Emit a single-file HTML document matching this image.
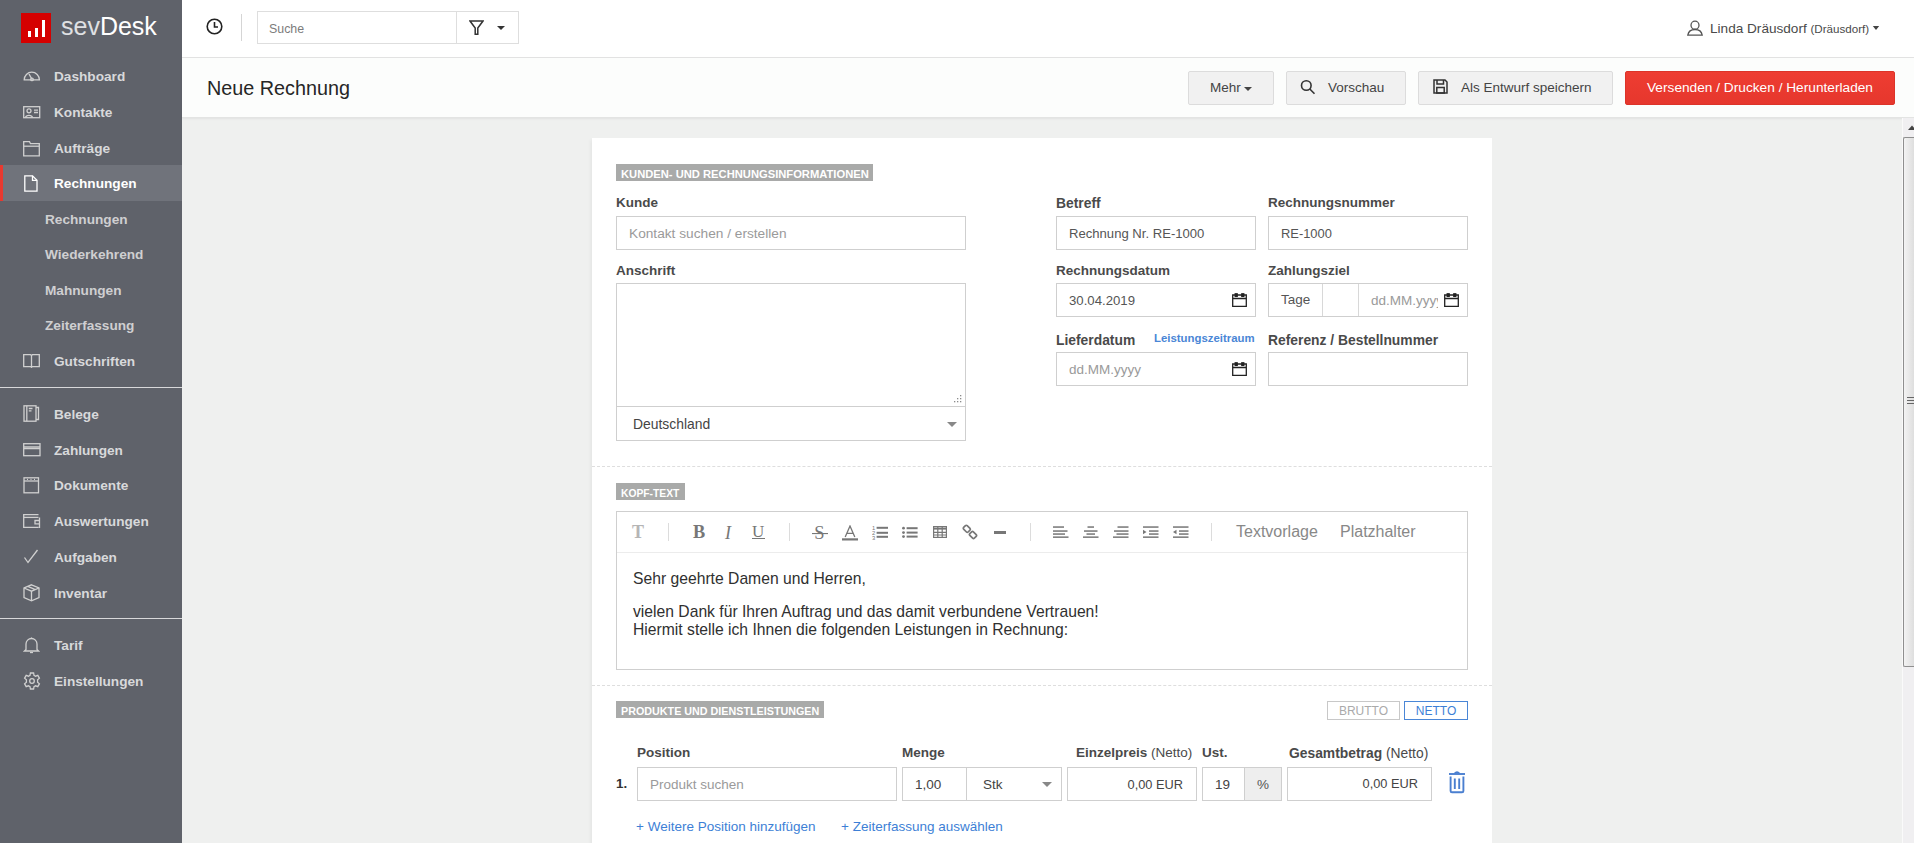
<!DOCTYPE html>
<html><head><meta charset="utf-8">
<style>
*{box-sizing:border-box;margin:0;padding:0}
html,body{width:1914px;height:843px;overflow:hidden;background:#eff0ef;font-family:"Liberation Sans",sans-serif;color:#333}
.a{position:absolute}
.nw{white-space:nowrap}
#side{left:0;top:0;width:182px;height:843px;background:#5f626a}
.nav{position:absolute;left:54px;color:#d8d9db;font-weight:bold;font-size:13.65px;line-height:20px;white-space:nowrap}
.ic{position:absolute;fill:none;stroke:#d0d0d0;stroke-width:1.3}
.sub{position:absolute;left:45px;color:#cfcfd1;font-weight:bold;font-size:13.65px;line-height:20px;white-space:nowrap}
.sep{position:absolute;left:0;width:182px;height:1px;background:#d8d8da}
#top{left:182px;top:0;width:1732px;height:58px;background:#fff;border-bottom:1px solid #e3e3e3}
#hdr{left:182px;top:58px;width:1732px;height:60px;background:#fcfdfc;border-bottom:1px solid #e3e4e3;box-shadow:0 1px 2px rgba(0,0,0,.06)}
.btn{position:absolute;top:71px;height:34px;background:#f1f1f1;border:1px solid #dcdcdc;border-radius:2px;font-size:13.5px;color:#444;line-height:32px;white-space:nowrap}
#card{left:592px;top:138px;width:900px;height:720px;background:#fff;box-shadow:-2px 2px 3px rgba(0,0,0,.04)}
.lbl{position:absolute;background:#a9aaa9;color:#fff;font-weight:bold;font-size:11.2px;height:17px;line-height:21px;padding-left:5px;white-space:nowrap}
.fl{position:absolute;font-weight:bold;font-size:13.5px;color:#4a4a4a;white-space:nowrap;line-height:16px}
.inp{position:absolute;height:34px;border:1px solid #cfcfcf;background:#fff;font-size:13.5px;color:#555;line-height:34px;padding-left:12px;white-space:nowrap}
.ph{color:#9a9a9a}
.dash{position:absolute;left:0;width:900px;height:0;border-top:1px dashed #dedede}
.link{position:absolute;color:#3d7fd6;font-size:13.5px;white-space:nowrap}
</style></head><body>
<div id="side" class="a">
  <!-- logo -->
  <div class="a" style="left:21px;top:13px;width:30px;height:30px;background:#d50000"></div>
  <div class="a" style="left:28px;top:31px;width:3.3px;height:5.8px;background:#fff"></div>
  <div class="a" style="left:35.2px;top:27.5px;width:3.3px;height:9.3px;background:#fff"></div>
  <div class="a" style="left:41.8px;top:19.5px;width:3px;height:17.3px;background:#fff"></div>
  <div class="a nw" style="left:61px;top:9px;font-size:25px;color:#fff;line-height:34px"><span style="color:#dfe0e3">sev</span>Desk</div>

  <div class="nav" style="top:67px">Dashboard</div>
  <svg class="ic" style="left:23px;top:70px" width="18" height="12" viewBox="0 0 18 12"><path d="M1.2 9.8 A7.6 7.6 0 0 1 16.4 9.8 L1.2 9.8 Z"/><path d="M6 4 L8.6 8.6"/><circle cx="9" cy="9.4" r="1.3"/></svg>

  <div class="nav" style="top:103px">Kontakte</div>
  <svg class="ic" style="left:23px;top:106px" width="18" height="13" viewBox="0 0 18 13"><rect x="0.7" y="0.7" width="16" height="11"/><circle cx="6" cy="4.8" r="2"/><path d="M2.5 11.6 C3 8.6 9 8.6 9.5 11.6"/><path d="M11 4.2 L15 4.2 M11 6.5 L15 6.5"/></svg>

  <div class="nav" style="top:139px">Aufträge</div>
  <svg class="ic" style="left:23px;top:141px" width="18" height="16" viewBox="0 0 18 16"><path d="M0.7 0.7 L6.5 0.7 L7.5 2.7 L16.3 2.7 L16.3 14.8 L0.7 14.8 Z"/><path d="M0.7 5.2 L16.3 5.2"/></svg>

  <div class="a" style="left:0;top:165px;width:182px;height:36px;background:#70737b"></div>
  <div class="a" style="left:0;top:165px;width:3px;height:36px;background:#e8392f"></div>
  <div class="nav" style="top:174px;color:#fff">Rechnungen</div>
  <svg class="ic" style="left:24px;top:175px;stroke:#fff" width="14" height="17" viewBox="0 0 14 17"><path d="M0.8 0.8 L8.5 0.8 L13 5.3 L13 16.2 L0.8 16.2 Z"/><path d="M8.5 0.8 L8.5 5.3 L13 5.3"/></svg>

  <div class="sub" style="top:210px">Rechnungen</div>
  <div class="sub" style="top:245px">Wiederkehrend</div>
  <div class="sub" style="top:281px">Mahnungen</div>
  <div class="sub" style="top:316px">Zeiterfassung</div>

  <div class="nav" style="top:352px">Gutschriften</div>
  <svg class="ic" style="left:23px;top:354px" width="18" height="14" viewBox="0 0 18 14"><path d="M0.7 0.7 L7.6 0.7 L8.5 1.5 L9.4 0.7 L16.3 0.7 L16.3 12.6 L9.4 12.6 L8.5 13.3 L7.6 12.6 L0.7 12.6 Z"/><path d="M8.5 1.5 L8.5 13.3"/></svg>

  <div class="sep" style="top:387px"></div>

  <div class="nav" style="top:405px">Belege</div>
  <svg class="ic" style="left:23px;top:405px" width="17" height="17" viewBox="0 0 17 17"><rect x="1" y="0.8" width="12" height="15.4"/><path d="M3.8 0.8 L3.8 16.2"/><path d="M13 2.5 L15.5 2.5 L15.5 14.5 L13 14.5"/><path d="M5.8 3.5 L9.5 3.5 M5.8 5.8 L8.5 5.8"/></svg>

  <div class="nav" style="top:441px">Zahlungen</div>
  <svg class="ic" style="left:23px;top:443px" width="18" height="14" viewBox="0 0 18 14"><rect x="0.7" y="0.7" width="16.3" height="12"/><path d="M0.7 4 L17 4 M0.7 5.6 L17 5.6"/></svg>

  <div class="nav" style="top:476px">Dokumente</div>
  <svg class="ic" style="left:23px;top:477px" width="17" height="17" viewBox="0 0 17 17"><rect x="1" y="0.8" width="14.5" height="15"/><path d="M1 4 L15.5 4"/><path d="M4 2.4 L5 2.4 M7.5 2.4 L8.5 2.4 M11 2.4 L12 2.4"/></svg>

  <div class="nav" style="top:512px">Auswertungen</div>
  <svg class="ic" style="left:23px;top:514px" width="18" height="15" viewBox="0 0 18 15"><path d="M15.5 13.3 L0.7 13.3 L0.7 0.7 L15.5 0.7"/><path d="M0.7 3.4 L15.5 3.4"/><path d="M16.5 3.4 L16.5 13.3 L15.5 13.3 M16.5 6.5 L12 6.5 L12 9.8 L16.5 9.8"/></svg>

  <div class="nav" style="top:548px">Aufgaben</div>
  <svg class="ic" style="left:23px;top:549px" width="16" height="15" viewBox="0 0 16 15"><path d="M1.5 8.5 L5 13.5 L14.5 1"/></svg>

  <div class="nav" style="top:584px">Inventar</div>
  <svg class="ic" style="left:23px;top:584px" width="18" height="18" viewBox="0 0 18 18"><path d="M8.5 0.8 L16 4 L16 13.5 L8.5 16.8 L1 13.5 L1 4 Z"/><path d="M1 4 L8.5 7.2 L16 4 M8.5 7.2 L8.5 16.8 M4.8 2.4 L12.3 5.6"/></svg>

  <div class="sep" style="top:618px"></div>

  <div class="nav" style="top:636px">Tarif</div>
  <svg class="ic" style="left:23px;top:637px" width="17" height="17" viewBox="0 0 17 17"><path d="M3 12.5 L3 7 A5.5 5.5 0 0 1 14 7 L14 12.5 L15.5 14 L1.5 14 Z"/><path d="M7 15.5 L10 15.5"/><path d="M8.5 0.5 L8.5 1.5"/></svg>

  <div class="nav" style="top:672px">Einstellungen</div>
  <svg class="ic" style="left:23px;top:672px" width="18" height="18" viewBox="0 0 18 18"><path d="M7.4 1 L10.6 1 L11 3.3 L12.6 4.2 L14.8 3.4 L16.4 6.2 L14.6 7.7 L14.6 10.3 L16.4 11.8 L14.8 14.6 L12.6 13.8 L11 14.7 L10.6 17 L7.4 17 L7 14.7 L5.4 13.8 L3.2 14.6 L1.6 11.8 L3.4 10.3 L3.4 7.7 L1.6 6.2 L3.2 3.4 L5.4 4.2 L7 3.3 Z"/><circle cx="9" cy="9" r="2.3"/></svg>
</div>

<!-- top bar -->
<div id="top" class="a"></div>
<svg class="a" style="left:205.5px;top:18px" width="17" height="17" viewBox="0 0 17 17" fill="none" stroke="#222" stroke-width="1.6"><circle cx="8.5" cy="8.5" r="7.3"/><path d="M8.5 4 L8.5 9 L12 9"/></svg>
<div class="a" style="left:241px;top:14px;width:1px;height:27px;background:#d5d5d5"></div>
<div class="a" style="left:257px;top:11px;width:262px;height:33px;border:1px solid #dedede;background:#fff"></div>
<div class="a" style="left:456px;top:12px;width:1px;height:31px;background:#dedede"></div>
<div class="a nw" style="left:269px;top:21px;font-size:12.4px;color:#7c7c7c;line-height:16px">Suche</div>
<svg class="a" style="left:469px;top:20px" width="15" height="16" viewBox="0 0 15 16" fill="none" stroke="#333" stroke-width="1.5"><path d="M1 1 L14 1 L8.8 8 L8.8 14.3 L6.2 14.3 L6.2 8 Z"/></svg>
<svg class="a" style="left:497px;top:26px" width="8" height="4" viewBox="0 0 8 4"><path d="M0 0 L8 0 L4 4 Z" fill="#333"/></svg>

<svg class="a" style="left:1687px;top:20px" width="16" height="16" viewBox="0 0 16 16" fill="none" stroke="#555" stroke-width="1.3"><circle cx="8" cy="5.2" r="4"/><path d="M0.8 15.2 C1.5 10.8 4.5 9.5 8 9.5 C11.5 9.5 14.5 10.8 15.2 15.2 Z"/></svg>
<div class="a nw" style="left:1710px;top:21px;font-size:13.6px;color:#4a4a4a;line-height:16px">Linda Dräusdorf <span style="font-size:11.6px">(Dräusdorf)</span></div>
<svg class="a" style="left:1872px;top:26px" width="8" height="4" viewBox="0 0 8 5"><path d="M0 0 L8 0 L4 5 Z" fill="#444"/></svg>

<div id="hdr" class="a"></div>
<div class="a nw" style="left:207px;top:76px;font-size:19.8px;color:#262626;line-height:24px">Neue Rechnung</div>

<div class="btn" style="left:1188px;width:86px;padding-left:21px">Mehr</div>
<svg class="a" style="left:1244px;top:87px" width="8" height="4" viewBox="0 0 8 4"><path d="M0 0 L8 0 L4 4 Z" fill="#444"/></svg>
<div class="btn" style="left:1286px;width:120px;padding-left:41px">Vorschau</div>
<svg class="a" style="left:1300px;top:79px" width="16" height="16" viewBox="0 0 16 16" fill="none" stroke="#333" stroke-width="1.6"><circle cx="6.3" cy="6.5" r="4.8"/><path d="M9.8 10 L14.5 14.7"/></svg>
<div class="btn" style="left:1418px;width:195px;padding-left:42px">Als Entwurf speichern</div>
<svg class="a" style="left:1433px;top:79px" width="15" height="15" viewBox="0 0 15 15" fill="none" stroke="#333" stroke-width="1.5"><path d="M1 1 L12 1 L14 3 L14 14 L1 14 Z"/><path d="M4 1 L4 5 L10.5 5 L10.5 1"/><rect x="3.8" y="8.5" width="7.4" height="5.5"/></svg>
<div class="btn" style="left:1625px;width:270px;background:linear-gradient(#ee3d32,#e6372d);border-color:#dc3429;color:#fff;text-align:center;font-size:13.7px">Versenden / Drucken / Herunterladen</div>

<!-- card -->
<div id="card" class="a"></div>
<div class="lbl" style="left:616px;top:164px;width:257px">KUNDEN- UND RECHNUNGSINFORMATIONEN</div>

<div class="fl" style="left:616px;top:195px">Kunde</div>
<div class="inp ph" style="left:616px;top:216px;width:350px;font-size:13.7px">Kontakt suchen / erstellen</div>
<div class="fl" style="left:616px;top:263px">Anschrift</div>
<div class="inp" style="left:616px;top:283px;width:350px;height:124px"></div>
<svg class="a" style="left:954px;top:395px" width="9" height="9" viewBox="0 0 9 9" fill="#8a8a8a"><rect x="6" y="0" width="1.3" height="1.3"/><rect x="3" y="3" width="1.3" height="1.3"/><rect x="6" y="3" width="1.3" height="1.3"/><rect x="0" y="6" width="1.3" height="1.3"/><rect x="3" y="6" width="1.3" height="1.3"/><rect x="6" y="6" width="1.3" height="1.3"/></svg>
<div class="inp" style="left:616px;top:406px;width:350px;height:35px;padding-left:16px;color:#444;font-size:13.9px">Deutschland</div>
<svg class="a" style="left:947px;top:422px" width="10" height="5" viewBox="0 0 10 5"><path d="M0 0 L10 0 L5 5 Z" fill="#888"/></svg>

<div class="fl" style="left:1056px;top:195px;font-size:13.85px">Betreff</div>
<div class="inp" style="left:1056px;top:216px;width:200px;font-size:13.1px">Rechnung Nr. RE-1000</div>
<div class="fl" style="left:1268px;top:195px">Rechnungsnummer</div>
<div class="inp" style="left:1268px;top:216px;width:200px;font-size:12.9px">RE-1000</div>

<div class="fl" style="left:1056px;top:263px">Rechnungsdatum</div>
<div class="inp" style="left:1056px;top:283px;width:200px;font-size:13.2px">30.04.2019</div>
<svg class="a cal" style="left:1232px;top:293px" width="15" height="14" viewBox="0 0 15 14" fill="none" stroke="#222" stroke-width="1.3"><path d="M0.7 2 L14.3 2 L14.3 13.3 L0.7 13.3 Z M0.7 5.5 L14.3 5.5"/><rect x="3.2" y="0.8" width="2" height="2.6" fill="#222"/><rect x="9.8" y="0.8" width="2" height="2.6" fill="#222"/></svg>

<div class="fl" style="left:1268px;top:263px">Zahlungsziel</div>
<div class="inp" style="left:1268px;top:283px;width:200px"></div>
<div class="a nw" style="left:1281px;top:292px;font-size:13.5px;color:#555;line-height:16px">Tage</div>
<div class="a" style="left:1322px;top:284px;width:1px;height:32px;background:#d8d8d8"></div>
<div class="a" style="left:1358px;top:284px;width:1px;height:32px;background:#d8d8d8"></div>
<div class="a nw ph" style="left:1371px;top:293px;width:67px;overflow:hidden;font-size:13.5px;line-height:16px">dd.MM.yyyy</div>
<svg class="a cal" style="left:1444px;top:293px" width="15" height="14" viewBox="0 0 15 14" fill="none" stroke="#222" stroke-width="1.3"><path d="M0.7 2 L14.3 2 L14.3 13.3 L0.7 13.3 Z M0.7 5.5 L14.3 5.5"/><rect x="3.2" y="0.8" width="2" height="2.6" fill="#222"/><rect x="9.8" y="0.8" width="2" height="2.6" fill="#222"/></svg>

<div class="fl" style="left:1056px;top:332px;font-size:13.85px">Lieferdatum</div>
<div class="a nw" style="left:1154px;top:331px;font-size:11.4px;font-weight:bold;color:#4a86d6;line-height:14px">Leistungszeitraum</div>
<div class="inp ph" style="left:1056px;top:352px;width:200px">dd.MM.yyyy</div>
<svg class="a cal" style="left:1232px;top:362px" width="15" height="14" viewBox="0 0 15 14" fill="none" stroke="#222" stroke-width="1.3"><path d="M0.7 2 L14.3 2 L14.3 13.3 L0.7 13.3 Z M0.7 5.5 L14.3 5.5"/><rect x="3.2" y="0.8" width="2" height="2.6" fill="#222"/><rect x="9.8" y="0.8" width="2" height="2.6" fill="#222"/></svg>
<div class="fl" style="left:1268px;top:332px;font-size:13.85px">Referenz / Bestellnummer</div>
<div class="inp" style="left:1268px;top:352px;width:200px"></div>

<div class="dash" style="left:592px;top:466px"></div>

<div class="lbl" style="left:616px;top:483px;width:69px;font-size:10.3px">KOPF-TEXT</div>
<div class="inp" style="left:616px;top:511px;width:852px;height:159px"></div>
<div class="a" style="left:617px;top:552px;width:850px;height:1px;background:#ececec"></div>

<!-- editor toolbar -->
<div class="a nw" style="left:632px;top:522px;font-family:'Liberation Serif',serif;font-weight:bold;font-size:18px;color:#b5b5b5;line-height:20px">T</div>
<div class="a" style="left:668px;top:523px;width:1px;height:18px;background:#dcdcdc"></div>
<div class="a nw" style="left:693px;top:522px;font-family:'Liberation Serif',serif;font-weight:bold;font-size:18.3px;color:#777;line-height:20px">B</div>
<div class="a nw" style="left:725px;top:523px;font-family:'Liberation Serif',serif;font-style:italic;font-size:18px;color:#777;line-height:20px">I</div>
<div class="a nw" style="left:752px;top:522px;font-family:'Liberation Serif',serif;font-size:17px;color:#777;line-height:20px">U</div>
<div class="a" style="left:752px;top:537.6px;width:13px;height:1.2px;background:#777"></div>
<div class="a" style="left:789px;top:523px;width:1px;height:18px;background:#dcdcdc"></div>
<svg class="a" style="left:812px;top:524px" width="16" height="16" viewBox="0 0 16 16"><text x="2.2" y="14.8" font-family="Liberation Serif" font-size="18.5" fill="#777">S</text><rect x="0" y="9" width="16" height="1.1" fill="#777"/></svg>
<svg class="a" style="left:842px;top:525px" width="16" height="16" viewBox="0 0 16 16"><path d="M3.2 12 L8 1 L12.8 12 M4.8 8.3 L11.2 8.3" fill="none" stroke="#777" stroke-width="1.3"/><rect x="0" y="13.3" width="16" height="2.2" fill="#777"/></svg>
<svg class="a" style="left:872px;top:524px" width="17" height="16" viewBox="0 0 17 16" fill="#777"><text x="0" y="5.6" font-family="Liberation Sans" font-size="5.8">1</text><text x="0" y="10.6" font-family="Liberation Sans" font-size="5.8">2</text><text x="0" y="15.6" font-family="Liberation Sans" font-size="5.8">3</text><rect x="4.6" y="2.8" width="11.4" height="2"/><rect x="4.6" y="7.8" width="11.4" height="2"/><rect x="4.6" y="11.8" width="11.4" height="2"/></svg>
<svg class="a" style="left:902px;top:526px" width="16" height="13" viewBox="0 0 16 13" fill="#777"><circle cx="1.5" cy="2.2" r="1.4"/><circle cx="1.5" cy="6.6" r="1.4"/><circle cx="1.5" cy="10.6" r="1.4"/><rect x="4.6" y="1.2" width="11" height="2"/><rect x="4.6" y="5.6" width="11" height="2"/><rect x="4.6" y="9.6" width="11" height="2"/></svg>
<svg class="a" style="left:933px;top:526px" width="14" height="12" viewBox="0 0 14 12" fill="none" stroke="#777" stroke-width="1.2"><rect x="0.6" y="0.6" width="12.8" height="10.8"/><path d="M0.6 2.6 L13.4 2.6" stroke-width="2"/><path d="M0.6 6.3 L13.4 6.3 M0.6 9 L13.4 9 M4.8 0.6 L4.8 11.4 M9.2 0.6 L9.2 11.4"/></svg>
<svg class="a" style="left:962px;top:524px" width="16" height="16" viewBox="0 0 16 16" fill="none" stroke="#777" stroke-width="1.7"><rect x="1.6" y="2.3" width="6.4" height="5" rx="1.2" transform="rotate(45 4.8 4.8)"/><rect x="7.8" y="8.5" width="6.4" height="5" rx="1.2" transform="rotate(45 11 11)"/></svg>
<div class="a" style="left:994px;top:531px;width:12px;height:3px;background:#777"></div>
<div class="a" style="left:1030px;top:523px;width:1px;height:18px;background:#dcdcdc"></div>
<svg class="a" style="left:1053px;top:526px" width="16" height="12" viewBox="0 0 16 12" fill="#777"><rect x="0" y="0.3" width="11" height="1.5"/><rect x="0" y="4.3" width="14.5" height="1.5"/><rect x="0" y="7.3" width="12" height="1.5"/><rect x="0" y="10.4" width="15.5" height="1.5"/></svg>
<svg class="a" style="left:1083px;top:526px" width="16" height="12" viewBox="0 0 16 12" fill="#777"><rect x="4.5" y="0.3" width="6.5" height="1.5"/><rect x="1" y="4.3" width="13.5" height="1.5"/><rect x="3.5" y="7.3" width="8.5" height="1.5"/><rect x="0" y="10.4" width="15.5" height="1.5"/></svg>
<svg class="a" style="left:1113px;top:526px" width="16" height="12" viewBox="0 0 16 12" fill="#777"><rect x="4.5" y="0.3" width="11" height="1.5"/><rect x="1" y="4.3" width="14.5" height="1.5"/><rect x="3.5" y="7.3" width="12" height="1.5"/><rect x="0" y="10.4" width="15.5" height="1.5"/></svg>
<svg class="a" style="left:1143px;top:526px" width="16" height="12" viewBox="0 0 16 12" fill="#777"><rect x="0" y="0.3" width="15.5" height="1.5"/><rect x="6" y="4.3" width="9.5" height="1.5"/><rect x="6" y="7.3" width="9.5" height="1.5"/><rect x="0" y="10.4" width="15.5" height="1.5"/><path d="M0 3.8 L3.5 6 L0 8.3 Z"/></svg>
<svg class="a" style="left:1173px;top:526px" width="16" height="12" viewBox="0 0 16 12" fill="#777"><rect x="0" y="0.3" width="15.5" height="1.5"/><rect x="6" y="4.3" width="9.5" height="1.5"/><rect x="6" y="7.3" width="9.5" height="1.5"/><rect x="0" y="10.4" width="15.5" height="1.5"/><path d="M3.5 3.8 L0 6 L3.5 8.3 Z"/></svg>
<div class="a" style="left:1211px;top:523px;width:1px;height:18px;background:#dcdcdc"></div>
<div class="a nw" style="left:1236px;top:522px;font-size:16px;color:#888;line-height:20px">Textvorlage</div>
<div class="a nw" style="left:1340px;top:522px;font-size:16px;color:#888;line-height:20px">Platzhalter</div>

<div class="a nw" style="left:633px;top:570px;font-size:15.7px;color:#303030;line-height:18px">Sehr geehrte Damen und Herren,</div>
<div class="a nw" style="left:633px;top:603px;font-size:15.7px;color:#303030;line-height:18px">vielen Dank für Ihren Auftrag und das damit verbundene Vertrauen!<br>Hiermit stelle ich Ihnen die folgenden Leistungen in Rechnung:</div>

<div class="dash" style="left:592px;top:685px"></div>

<!-- products -->
<div class="lbl" style="left:616px;top:701px;width:208px;font-size:10.75px">PRODUKTE UND DIENSTLEISTUNGEN</div>
<div class="a nw" style="left:1327px;top:701px;width:73px;height:19px;border:1px solid #c8c8c8;font-size:12px;color:#aaa;text-align:center;line-height:19px">BRUTTO</div>
<div class="a nw" style="left:1404px;top:701px;width:64px;height:19px;border:1px solid #4a86d6;font-size:12px;color:#3d7fd6;text-align:center;line-height:19px">NETTO</div>

<div class="fl" style="left:637px;top:745px">Position</div>
<div class="fl" style="left:902px;top:745px">Menge</div>
<div class="fl" style="left:1076px;top:745px">Einzelpreis <span style="font-weight:normal">(Netto)</span></div>
<div class="fl" style="left:1202px;top:745px">Ust.</div>
<div class="fl" style="left:1289px;top:745px;font-size:13.85px">Gesamtbetrag <span style="font-weight:normal">(Netto)</span></div>

<div class="a nw" style="left:616px;top:776px;font-size:13.4px;font-weight:bold;color:#333;line-height:16px">1.</div>
<div class="inp ph" style="left:637px;top:767px;width:260px">Produkt suchen</div>
<div class="inp" style="left:902px;top:767px;width:65px;padding-left:12px;color:#444">1,00</div>
<div class="inp" style="left:966px;top:767px;width:96px;padding-left:16px;color:#444">Stk</div>
<svg class="a" style="left:1042px;top:782px" width="10" height="5" viewBox="0 0 10 5"><path d="M0 0 L10 0 L5 5 Z" fill="#888"/></svg>
<div class="inp" style="left:1067px;top:767px;width:130px;padding:0 13px 0 0;text-align:right;color:#444;font-size:12.8px">0,00 EUR</div>
<div class="inp" style="left:1202px;top:767px;width:43px;padding-left:12px;color:#444">19</div>
<div class="inp" style="left:1244px;top:767px;width:38px;padding-left:0;text-align:center;background:#eeeeee;color:#555">%</div>
<div class="inp" style="left:1287px;top:767px;width:145px;padding:0 13px 0 0;text-align:right;color:#444;font-size:12.8px;line-height:32px">0,00 EUR</div>
<svg class="a" style="left:1448px;top:770px" width="18" height="24" viewBox="0 0 18 24" fill="none" stroke="#4a7fd0" stroke-width="1.9"><path d="M1 4 L17 4"/><path d="M6.5 3.5 Q9 0.8 11.5 3.5" stroke-width="1.6"/><path d="M2.6 6.5 L2.6 21 Q2.6 22.3 4 22.3 L14 22.3 Q15.4 22.3 15.4 21 L15.4 6.5"/><path d="M6.8 8.5 L6.8 19 M11.2 8.5 L11.2 19"/></svg>

<div class="link" style="left:636px;top:819px;line-height:16px">+ Weitere Position hinzufügen</div>
<div class="link" style="left:841px;top:819px;line-height:16px">+ Zeiterfassung auswählen</div>

<!-- scrollbar -->
<div class="a" style="left:1902px;top:118px;width:12px;height:725px;background:#f0eff1;border-left:1px solid #fafafa"></div>
<svg class="a" style="left:1908px;top:125px" width="8" height="5" viewBox="0 0 8 5"><path d="M0 5 L4 0.5 L8 5 Z" fill="#444"/></svg>
<div class="a" style="left:1903px;top:137px;width:11px;height:530px;background:linear-gradient(90deg,#f3f3f3,#dedede);border:1px solid #8f8f8f;border-right:none;border-radius:2px 0 0 2px"></div>
<div class="a" style="left:1907px;top:397px;width:7px;height:1px;background:#666"></div>
<div class="a" style="left:1907px;top:400px;width:7px;height:1px;background:#666"></div>
<div class="a" style="left:1907px;top:403px;width:7px;height:1px;background:#666"></div>
</body></html>
